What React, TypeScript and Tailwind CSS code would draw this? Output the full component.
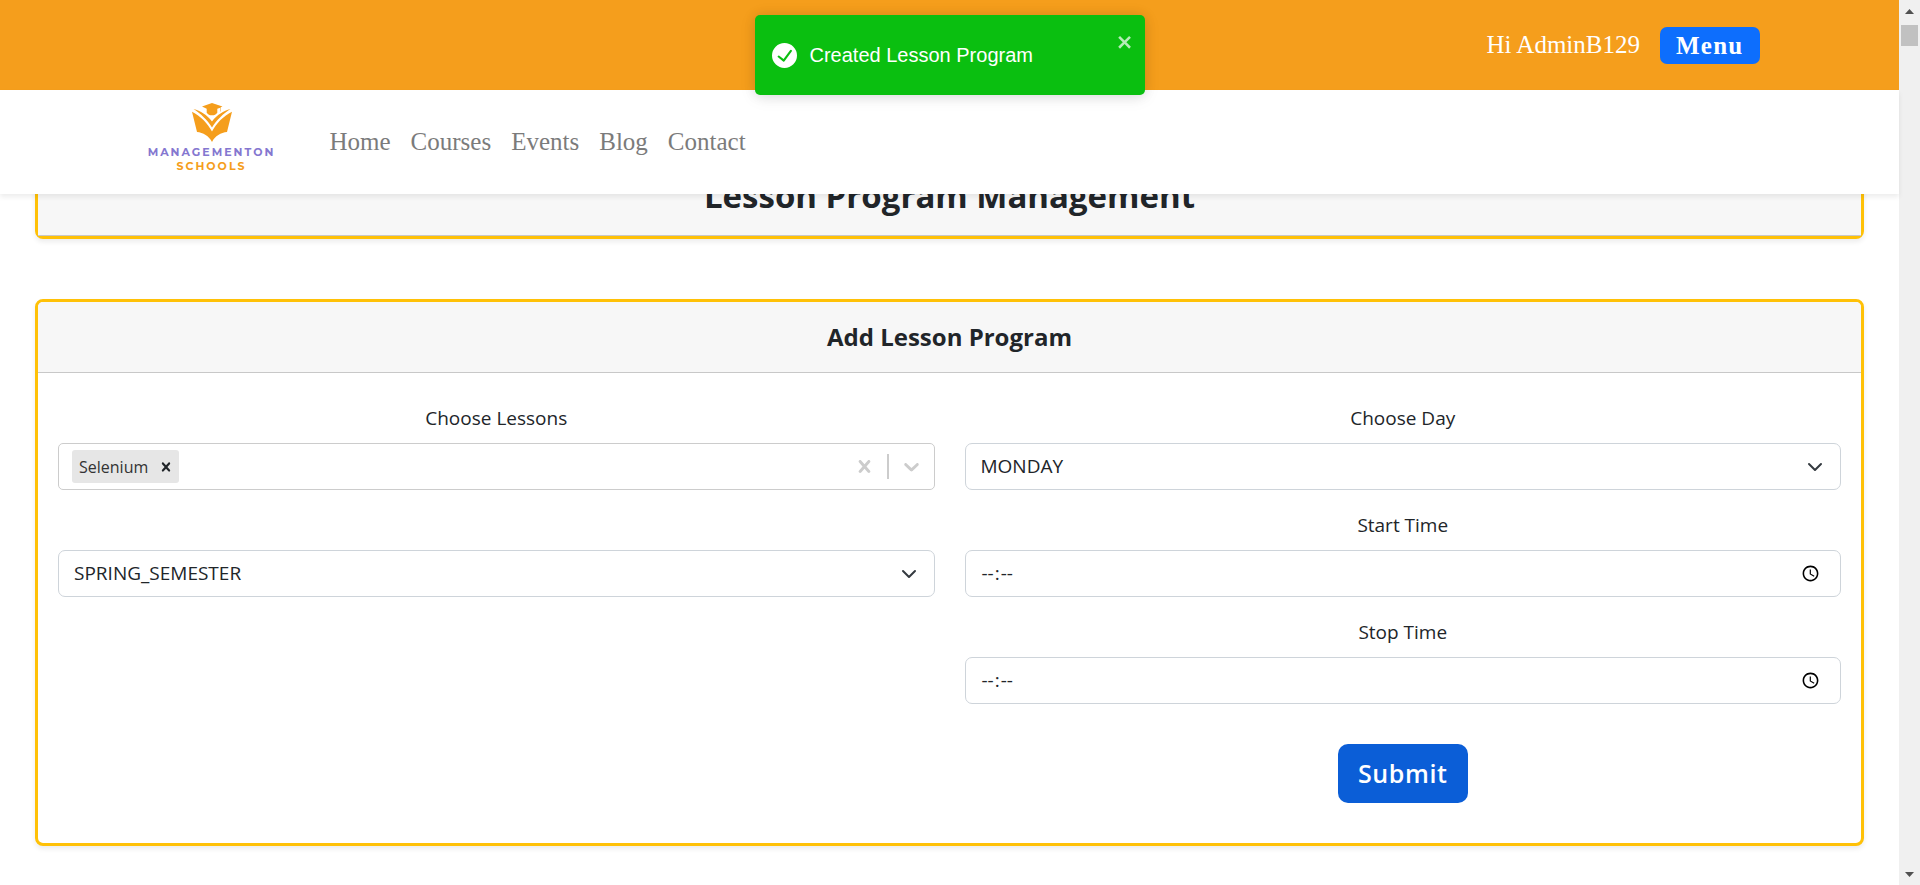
import { useState } from "react";
import type { ReactNode } from "react";

const navLinks = ["Home", "Courses", "Events", "Blog", "Contact"];
const days = ["MONDAY", "TUESDAY", "WEDNESDAY", "THURSDAY", "FRIDAY"];
const terms = ["SPRING_SEMESTER", "FALL_SEMESTER"];

const controlClass =
  "block h-[47px] w-full rounded-[7px] border border-[#ced4da] bg-white pl-[15px] text-[19px] text-[#212529]";

function Logo() {
  return (
    <a href="#home" className="flex w-32 flex-col items-center whitespace-nowrap pb-2 font-['Montserrat','Inter',sans-serif] text-[11px] font-bold leading-[14px]">
      <svg viewBox="0 0 40 39" className="mb-[3px] h-[39px] w-10" fill="#f59e1c" aria-hidden="true">
        <path d="M20 0 30.500 3.600 28.700 4.300V8.500H28.200V4.700L25.300 5.800V9.800C23.400 13.200 16.600 13.200 14.700 9.800V5.800L10 3.600Z" />
        <path d="M1.500 6C8.500 8 15 11.500 20 18.500 25 11.500 31.500 8 38.500 6 31.500 10.500 24.500 17 20 24.500 15.500 17 8.500 10.500 1.500 6Z" />
        <path d="M0 8.700C8.500 13 15.500 20 20 28.500 24.500 20 31.500 13 40 8.700L35 29C29 29.500 23 33 20 39 17 33 11 29.500 5 29Z" />
      </svg>
      <span className="tracking-[2px] text-[#8577d0]">MANAGEMENTON</span>
      <span className="tracking-[2px] text-[#f59e1c]">SCHOOLS</span>
    </a>
  );
}

function Toast({ onClose }: { onClose: () => void }) {
  return (
    <div
      role="alert"
      className="absolute left-1/2 top-[15px] z-30 flex h-20 w-[390px] -translate-x-1/2 items-center gap-[13px] rounded-[5px] bg-[#0abf10] pl-[17px] font-['Liberation_Sans',sans-serif] text-xl text-white shadow-[0_1px_12px_rgba(0,0,0,0.1),0_2px_18px_rgba(0,0,0,0.08)]"
    >
      <svg viewBox="0 0 24 24" className="size-[25px]" fill="white" aria-hidden="true">
        <path d="M12 0a12 12 0 1 0 12 12A12.014 12.014 0 0 0 12 0zm6.927 8.200-6.845 9.289a1.011 1.011 0 0 1-1.430.188l-4.888-3.908a1 1 0 1 1 1.250-1.562l4.076 3.261 6.227-8.451a1 1 0 1 1 1.610 1.183z" />
      </svg>
      <span>Created Lesson Program</span>
      <button type="button" aria-label="close" onClick={onClose} className="absolute right-[9px] top-[17px] px-[2px] opacity-70">
        <svg viewBox="0 0 14 16" className="h-5 w-[17px]" fill="white" aria-hidden="true">
          <path
            fillRule="evenodd"
            d="M7.710 8.230l3.750 3.750-1.480 1.480-3.750-3.750-3.750 3.750L1 11.980l3.750-3.750L1 4.480 2.480 3l3.750 3.750L9.980 3l1.480 1.480-3.750 3.750z"
          />
        </svg>
      </button>
    </div>
  );
}

function Card({ children }: { children: ReactNode }) {
  return (
    <section className="rounded-[8px] border-[3px] border-[#ffc107] bg-white shadow-[0_3px_5px_rgba(0,0,0,0.075)]">
      {children}
    </section>
  );
}

function Label({ id, children }: { id: string; children: ReactNode }) {
  return (
    <label htmlFor={id} className="mb-[10px] block text-center text-[19px] font-medium leading-[30px]">
      {children}
    </label>
  );
}

function SelectBox({ id, options }: { id: string; options: string[] }) {
  return (
    <div className="relative">
      <select id={id} aria-label={id} className={controlClass + " appearance-none"}>
        {options.map((o) => (
          <option key={o}>{o}</option>
        ))}
      </select>
      <svg
        viewBox="0 0 16 16"
        className="pointer-events-none absolute right-4 top-[14px] size-5"
        fill="none"
        stroke="#343a40"
        strokeWidth="2"
        strokeLinecap="round"
        strokeLinejoin="round"
        aria-hidden="true"
      >
        <path d="m2 5 6 6 6-6" transform="translate(1.600 1.600) scale(0.800)" />
      </svg>
    </div>
  );
}

function TimeField({ id, label }: { id: string; label: string }) {
  return (
    <div>
      <Label id={id}>{label}</Label>
      <input
        id={id}
        type="time"
        className={controlClass + " pr-4 [&::-webkit-datetime-edit-ampm-field]:hidden"}
      />
    </div>
  );
}

function Cross({ className }: { className: string }) {
  return (
    <svg viewBox="0 0 20 20" className={className} fill="currentColor" aria-hidden="true">
      <path d="M14.348 14.849c-0.469 0.469-1.229 0.469-1.697 0l-2.651-3.030-2.651 3.029c-0.469 0.469-1.229 0.469-1.697 0-0.469-0.469-0.469-1.229 0-1.697l2.758-3.150-2.759-3.152c-0.469-0.469-0.469-1.228 0-1.697s1.228-0.469 1.697 0l2.652 3.031 2.651-3.031c0.469-0.469 1.228-0.469 1.697 0s0.469 1.229 0 1.697l-2.758 3.152 2.758 3.150c0.469 0.469 0.469 1.229 0 1.698z" />
    </svg>
  );
}

function LessonPicker() {
  const [lessons, setLessons] = useState(["Selenium"]);
  return (
    <div className="flex h-[47px] items-center rounded-[5px] border border-[#cccccc] bg-white">
      <div className="flex h-full grow items-center gap-1 pl-[13px]">
        {lessons.map((l) => (
          <span key={l} className="flex h-[33px] items-center rounded-[3px] bg-[#e6e6e6] pl-[7px] text-[16px] text-[#333333]">
            {l}
            <button
              type="button"
              aria-label={"Remove " + l}
              onClick={() => setLessons(lessons.filter((x) => x !== l))}
              className="ml-[5px] px-1 text-[#212529]"
            >
              <Cross className="size-[18px]" />
            </button>
          </span>
        ))}
        <input id="lessons" className="min-w-0 grow bg-transparent text-[19px] outline-none" />
      </div>
      <div className="flex items-center text-[#cccccc]">
        <button type="button" aria-label="Clear lessons" onClick={() => setLessons([])} className="px-[10px]">
          <Cross className="size-[25px]" />
        </button>
        <span className="h-[25px] w-[2px] bg-[#cccccc]" />
        <button type="button" aria-label="Open lessons" className="px-[10px]">
          <svg viewBox="0 0 20 20" className="size-[25px]" fill="currentColor" aria-hidden="true">
            <path d="M4.516 7.548c0.436-0.446 1.043-0.481 1.576 0l3.908 3.747 3.908-3.747c0.533-0.481 1.141-0.446 1.574 0 0.436 0.445 0.408 1.197 0 1.615-0.406 0.418-4.695 4.502-4.695 4.502-0.217 0.223-0.502 0.335-0.787 0.335s-0.570-0.112-0.789-0.335c0 0-4.287-4.084-4.695-4.502s-0.436-1.170 0-1.615z" />
          </svg>
        </button>
      </div>
    </div>
  );
}

function ScrollRail() {
  return (
    <div className="flex w-[21px] shrink-0 flex-col items-center justify-between bg-[#f0f0f0] pb-[9px] pt-[9px]" aria-hidden="true">
      <div className="flex flex-col items-center gap-[11px]">
        <svg viewBox="0 0 9 5" className="h-[5px] w-[9px]" fill="#505050">
          <path d="M0 5 4.500 0 9 5Z" />
        </svg>
        <div className="h-[21px] w-[17px] bg-[#c1c1c1]" />
      </div>
      <svg viewBox="0 0 9 5" className="h-[5px] w-[9px]" fill="#505050">
        <path d="M0 0H9L4.500 5Z" />
      </svg>
    </div>
  );
}

export default function App() {
  const [toast, setToast] = useState(true);
  return (
    <div className="flex min-h-screen bg-white font-['Open_Sans',sans-serif] text-[#212529]">
      <div className="relative min-w-0 grow">
        {toast && <Toast onClose={() => setToast(false)} />}
        <header className="relative z-20 font-['Liberation_Serif',serif] text-[25px]">
          <div className="h-[90px] bg-[#f59e1c]">
            <div className="mx-auto flex h-full w-11/12 max-w-[1650px] items-center justify-end gap-5 pr-[15px] text-white">
              <span>Hi AdminB129</span>
              <button type="button" className="h-[37px] rounded-[7px] bg-[#0d6efd] px-4 font-bold leading-[37px] tracking-wider">
                Menu
              </button>
            </div>
          </div>
          <div className="h-[104px] bg-white shadow-[0_3px_5px_rgba(0,0,0,0.075)]">
            <div className="mx-auto flex h-full w-11/12 max-w-[1650px] items-center gap-[54px] pl-[23px]">
              <Logo />
              <nav className="flex gap-5 text-[#7b7b7b]">
                {navLinks.map((l) => (
                  <a key={l} href={"#" + l.toLowerCase()}>
                    {l}
                  </a>
                ))}
              </nav>
            </div>
          </div>
        </header>

        <main className="-mt-[34px] flex flex-col gap-[60px] px-[35px] pb-10">
          <Card>
            <h1 className="border-b border-[#c8c8c8] bg-[#f7f7f7] pb-[18px] pt-3 text-center text-[33px] font-bold leading-[42px]">
              Lesson Program Management
            </h1>
          </Card>

          <Card>
            <h2 className="rounded-t-[5px] border-b border-[#c8c8c8] bg-[#f7f7f7] py-5 text-center text-[24px] font-bold leading-[30px]">
              Add Lesson Program
            </h2>
            <form className="grid grid-cols-2 gap-[30px] px-5 pb-10 pt-[30px]" onSubmit={(e) => e.preventDefault()}>
              <div className="flex flex-col gap-5">
                <div>
                  <Label id="lessons">Choose Lessons</Label>
                  <LessonPicker />
                </div>
                <div className="pt-10">
                  <SelectBox id="term" options={terms} />
                </div>
              </div>
              <div className="flex flex-col gap-5">
                <div>
                  <Label id="day">Choose Day</Label>
                  <SelectBox id="day" options={days} />
                </div>
                <TimeField id="start" label="Start Time" />
                <TimeField id="stop" label="Stop Time" />
                <button
                  type="submit"
                  className="mt-5 h-[59px] self-center rounded-[10px] bg-[#0b5ed7] px-5 text-[25px] font-semibold tracking-wide text-white"
                >
                  Submit
                </button>
              </div>
            </form>
          </Card>
        </main>
      </div>
      <ScrollRail />
    </div>
  );
}
